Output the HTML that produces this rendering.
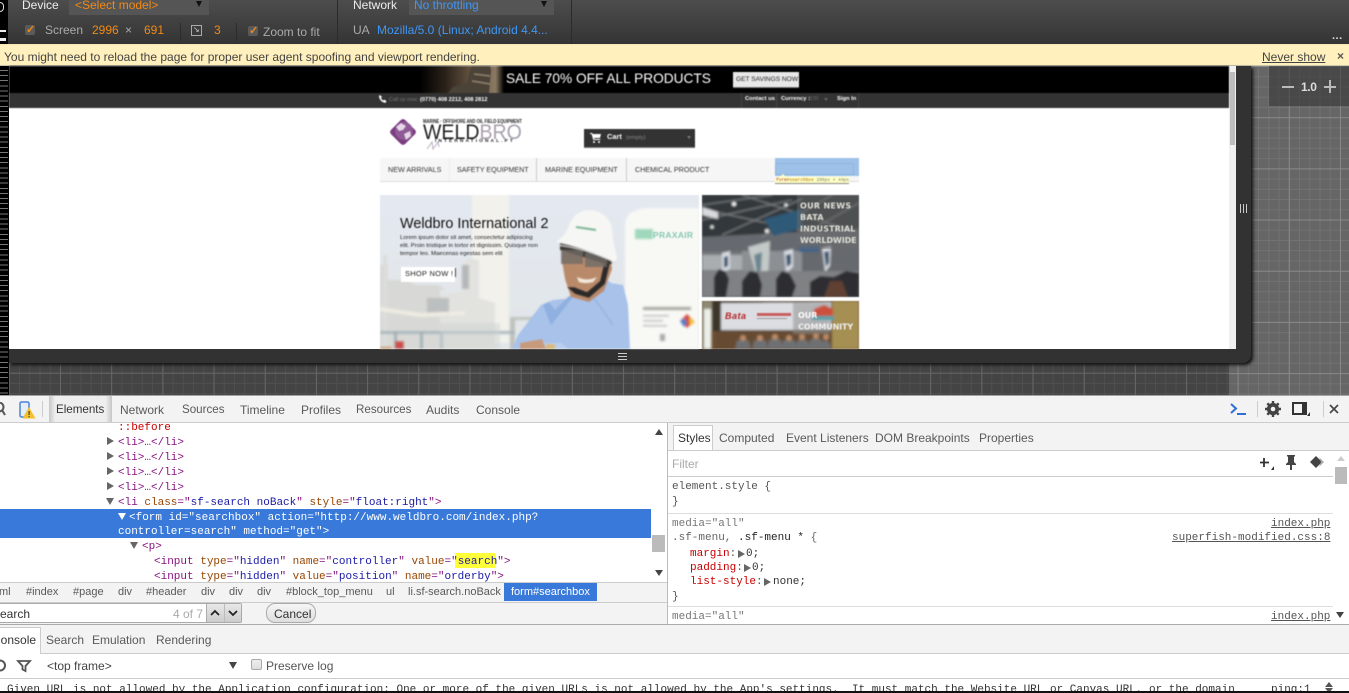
<!DOCTYPE html>
<html><head><meta charset="utf-8"><title>DevTools</title>
<style>
html,body{margin:0;padding:0;width:1349px;height:693px;overflow:hidden;background:#fff}
body{position:relative;font-family:"Liberation Sans",sans-serif;font-size:12px;color:#333}
.a{position:absolute}
.t{position:absolute;white-space:pre;line-height:14px}
.m{position:absolute;white-space:pre;font-family:"Liberation Mono",monospace;font-size:11px;line-height:14px;color:#444;margin-top:1px}
.tag{color:#881280}.an{color:#994500}.av{color:#1a1aa6}.red{color:#c80000}
.ln{position:absolute;background:#ccc}
.tri{position:absolute;width:0;height:0;border-style:solid}
.r{border-width:4px 0 4px 7px;border-color:transparent transparent transparent #666}
.d{border-width:7px 4px 0 4px;border-color:#666 transparent transparent transparent}
.g{color:#5a5a5a}
.bc{font-size:11px}
.or{color:#f08a17}.bl{color:#3f97f5}
.tb{color:#bdbdbd}
.cb{position:absolute;width:10px;height:10px;background:#5a5a5a;border-radius:2px}
.u{text-decoration:underline}
</style></head><body>

<!-- top toolbar -->
<div class="a" style="left:0;top:0;width:1349px;height:44px;background:linear-gradient(#4d4d4d,#343434)"></div>
<div class="a" style="left:0;top:0;width:8px;height:44px;background:#000"></div>
<div class="a" style="left:0;top:30px;width:6px;height:2px;background:#eee"></div>
<div class="a" style="left:0;top:38px;width:6px;height:3px;background:#eee"></div>
<div class="a" style="left:0;top:2px;width:3px;height:8px;border:1px solid #ddd;border-left:0;border-radius:0 4px 4px 0"></div>
<div class="a" style="left:69px;top:0;width:140px;height:15px;background:#555"></div>
<div class="a" style="left:409px;top:0;width:145px;height:15px;background:#555"></div>
<div class="t" style="left:22px;top:-2px;color:#eee">Device</div>
<div class="t or" style="left:75px;top:-2px">&lt;Select model&gt;</div>
<div class="tri" style="left:196px;top:1px;border-width:6px 3px 0;border-color:#111 transparent transparent"></div>
<div class="t" style="left:353px;top:-2px;color:#eee">Network</div>
<div class="t bl" style="left:414px;top:-2px">No throttling</div>
<div class="tri" style="left:541px;top:1px;border-width:6px 3px 0;border-color:#111 transparent transparent"></div>
<div class="a" style="left:337px;top:0;width:1px;height:44px;background:#2b2b2b"></div>
<div class="a" style="left:571px;top:0;width:1px;height:44px;background:#2b2b2b"></div>
<div class="a" style="left:180px;top:23px;width:1px;height:18px;background:#2b2b2b"></div>
<div class="a" style="left:236px;top:23px;width:1px;height:18px;background:#2b2b2b"></div>
<div class="cb" style="left:25px;top:25px"></div><div class="t" style="left:26px;top:23px;color:#f08a17;font-weight:bold;font-size:11px">✓</div>
<div class="t tb" style="left:45px;top:23px;color:#aaa">Screen</div>
<div class="t or" style="left:92px;top:23px">2996</div>
<div class="t" style="left:125px;top:23px;color:#aaa">×</div>
<div class="t or" style="left:144px;top:23px">691</div>
<div class="a" style="left:191px;top:25px;width:9px;height:9px;border:1px solid #aaa"></div>
<div class="t" style="left:193px;top:23px;color:#ccc;font-size:8px">↘</div>
<div class="t or" style="left:214px;top:23px">3</div>
<div class="cb" style="left:248px;top:26px"></div><div class="t" style="left:249px;top:24px;color:#f08a17;font-weight:bold;font-size:11px">✓</div>
<div class="t" style="left:263px;top:25px;color:#aaa">Zoom to fit</div>
<div class="t" style="left:353px;top:23px;color:#aaa">UA</div>
<div class="t bl" style="left:377px;top:23px">Mozilla/5.0 (Linux; Android 4.4...</div>
<div class="t" style="left:1332px;top:29px;color:#ddd;font-weight:bold;font-size:11px;letter-spacing:.5px">...</div>

<!-- notice -->
<div class="a" style="left:0;top:44px;width:1349px;height:21px;background:#fff0bd;border-top:1px solid #f5e8b8;box-sizing:border-box"></div>
<div class="a" style="left:0;top:65px;width:1349px;height:1px;background:#c8c4ae"></div>
<div class="t" style="left:4px;top:50px;color:#444">You might need to reload the page for proper user agent spoofing and viewport rendering.</div>
<div class="t u" style="left:1262px;top:50px;color:#444">Never show</div>
<div class="t" style="left:1337px;top:49px;color:#555;font-weight:bold">×</div>

<!-- canvas background -->
<div class="a" style="left:9px;top:66px;width:1340px;height:329px;background-color:#444;
background-image:linear-gradient(90deg,#666 1px,transparent 1px),linear-gradient(#666 1px,transparent 1px),linear-gradient(90deg,#4f4f4f 1px,transparent 1px),linear-gradient(#4f4f4f 1px,transparent 1px);
background-size:51.2px 51.2px,51.2px 51.2px,10.24px 10.24px,10.24px 10.24px;background-position:-0.2px -0.4px"></div>
<div class="a" style="left:1229px;top:66px;width:120px;height:329px;background-color:#666;
background-image:linear-gradient(90deg,#888 1px,transparent 1px),linear-gradient(#888 1px,transparent 1px),linear-gradient(90deg,#727272 1px,transparent 1px),linear-gradient(#727272 1px,transparent 1px);
background-size:51.2px 51.2px,51.2px 51.2px,10.24px 10.24px,10.24px 10.24px;background-position:8.6px 0px"></div>
<div class="a" style="left:1269px;top:66px;width:80px;height:40px;background:rgba(50,50,50,.55)"></div>
<div class="a" style="left:1282px;top:86px;width:12px;height:2px;background:#bbb"></div>
<div class="t" style="left:1301px;top:80px;color:#ddd;font-weight:bold;font-size:12px;letter-spacing:-.4px">1.0</div>
<div class="a" style="left:1324px;top:86px;width:12px;height:2px;background:#bbb"></div>
<div class="a" style="left:1329px;top:80px;width:2px;height:13px;background:#bbb"></div>
<!-- left ruler -->
<div class="a" style="left:0;top:66px;width:9px;height:329px;background:repeating-linear-gradient(#000 0 4px,#777 4px 5px,#000 5px 5.12px)"></div>
<div class="a" style="left:8px;top:66px;width:1px;height:329px;background:#000"></div>

<!-- device frame -->
<div class="a" style="left:9px;top:66px;width:1242px;height:297px;background:#323232;border-radius:0 0 8px 0;box-shadow:2px 2px 3px #111"></div>
<div class="a" style="left:9px;top:66px;width:1220px;height:283px;background:#fff"></div>
<div class="a" style="left:1229px;top:66px;width:7px;height:283px;background:#f0f0f0"></div>
<div class="a" style="left:1230px;top:72px;width:5px;height:73px;background:#bdbdbd"></div>
<div class="a" style="left:1240px;top:204px;width:1px;height:9px;background:#ccc"></div>
<div class="a" style="left:1243px;top:204px;width:1px;height:9px;background:#ccc"></div>
<div class="a" style="left:1246px;top:204px;width:1px;height:9px;background:#ccc"></div>
<div class="a" style="left:618px;top:353px;width:9px;height:1px;background:#ccc"></div>
<div class="a" style="left:618px;top:356px;width:9px;height:1px;background:#ccc"></div>
<div class="a" style="left:618px;top:359px;width:9px;height:1px;background:#ccc"></div>

<div class="a" style="left:0;top:0;width:1349px;height:349px;filter:blur(.4px)">
<!-- page: promo banner -->
<div class="a" style="left:9px;top:66px;width:1220px;height:27px;background:#000"></div>
<svg class="a" style="left:400px;top:66px" width="110" height="27" viewBox="0 0 110 27"><defs><linearGradient id="bg" x1="0" x2="1"><stop offset="0" stop-color="#000"/><stop offset=".3" stop-color="#2a221a"/><stop offset=".65" stop-color="#6d5a45"/><stop offset=".9" stop-color="#8a7963"/><stop offset="1" stop-color="#000"/></linearGradient></defs><rect x="20" width="84" height="27" fill="url(#bg)"/><path d="M48 27l5-6 14-4 3-13 2-4h18l1 4-2 23z" fill="#4b4238"/><path d="M74 8l16 2M72 15l18 3" stroke="#847663" stroke-width="2"/></svg>
<div class="t" style="left:506px;top:72px;color:#fff;font-size:13.7px">SALE 70% OFF ALL PRODUCTS</div>
<div class="a" style="left:733px;top:72px;width:66px;height:16px;background:#e8e8e8;border-bottom:1px solid #777;box-sizing:border-box"></div>
<div class="t" style="left:736px;top:73px;color:#222;font-size:6.6px">GET SAVINGS NOW</div>

<!-- page: top bar -->
<div class="a" style="left:9px;top:93px;width:1220px;height:15px;background:#333"></div>
<svg class="a" style="left:379px;top:95px" width="8" height="8" viewBox="0 0 8 8"><path d="M1 0l2 2-1 1c.5 1.2 1.3 2 2.500 2.500l1-1 2 2-1 1.200C3 8 0 4 0 1z" fill="#fff"/></svg>
<div class="t" style="left:389px;top:93px;color:#777;font-size:5.4px">Call us now:</div>
<div class="t" style="left:420px;top:93px;color:#fff;font-size:5.6px;font-weight:bold">(0770) 408 2212, 408 2812</div>
<div class="a" style="left:741px;top:93px;width:1px;height:15px;background:#444"></div>
<div class="a" style="left:776px;top:93px;width:1px;height:15px;background:#444"></div>
<div class="a" style="left:858px;top:93px;width:1px;height:15px;background:#444"></div>
<div class="t" style="left:745px;top:92px;color:#fff;font-size:5.8px;font-weight:bold">Contact us</div>
<div class="t" style="left:781px;top:92px;color:#fff;font-size:5.8px;font-weight:bold">Currency :</div>
<div class="t" style="left:809px;top:92px;color:#666;font-size:5.8px">IDR</div>
<div class="tri" style="left:824px;top:98px;border-width:3px 2.500px 0;border-color:#666 transparent transparent"></div>
<div class="t" style="left:837px;top:92px;color:#fff;font-size:5.8px;font-weight:bold">Sign In</div>

<!-- page: logo -->
<svg class="a" style="left:388px;top:117px" width="30" height="30" viewBox="0 0 30 30"><rect x="5" y="5" width="20" height="20" rx="3" transform="rotate(45 15 15)" fill="#7a3d80"/><circle cx="16" cy="14" r="9" fill="#8f5a95"/><path d="M8 10l5-4 5 3-3 4-4 1zM16 17l6-3 1 5-5 4z" fill="#e6d8e8"/></svg>
<div class="t" style="left:423px;top:115px;font-size:5px;color:#222;font-weight:bold;transform:scaleX(.82);transform-origin:0 0">MARINE · OFFSHORE AND OIL FIELD EQUIPMENT</div>
<div class="t" style="left:423px;top:124px;font-size:21px;line-height:18px;color:#222;transform:scaleX(.93);transform-origin:0 0">WELD<span style="color:#a8a0ad">BRO</span></div>
<div class="t" style="left:435px;top:135px;font-size:4.8px;letter-spacing:2.1px;color:#222;font-weight:bold">INTERNATIONAL.PT</div>
<svg class="a" style="left:425px;top:140px" width="22" height="10" viewBox="0 0 22 10"><path d="M2 9l5-7 1 7 5-7 1 5" fill="none" stroke="#b9aec0" stroke-width="1"/></svg>

<!-- page: cart -->
<div class="a" style="left:584px;top:129px;width:111px;height:19px;background:#333;border-bottom:1px solid #777;box-sizing:border-box"></div>
<svg class="a" style="left:590px;top:133px" width="11" height="10" viewBox="0 0 11 10"><path d="M0 0h2l1 1h8l-1 4H4l.300 1h6v1H3.300L1.500 1H0z" fill="#fff"/><circle cx="4" cy="9" r="1" fill="#fff"/><circle cx="9" cy="9" r="1" fill="#fff"/></svg>
<div class="t" style="left:607px;top:130px;color:#fff;font-size:7.4px;font-weight:bold">Cart</div>
<div class="t" style="left:626px;top:131px;color:#888;font-size:5.8px">(empty)</div>
<div class="tri" style="left:687px;top:136px;border-width:3px 2.500px 0;border-color:#777 transparent transparent"></div>

<!-- page: menu -->
<div class="a" style="left:380px;top:158px;width:479px;height:24px;background:#f6f6f6;border-bottom:1px solid #ddd;box-sizing:border-box"></div>
<div class="a" style="left:449px;top:158px;width:1px;height:23px;background:#eee"></div>
<div class="a" style="left:536px;top:158px;width:1px;height:23px;background:#ccc"></div>
<div class="a" style="left:626px;top:158px;width:1px;height:23px;background:#ccc"></div>
<div class="t" style="left:388px;top:163px;font-size:7.2px;color:#333">NEW ARRIVALS</div>
<div class="t" style="left:457px;top:163px;font-size:7.1px;color:#333">SAFETY EQUIPMENT</div>
<div class="t" style="left:545px;top:163px;font-size:7.2px;color:#333">MARINE EQUIPMENT</div>
<div class="t" style="left:635px;top:163px;font-size:7.2px;color:#333">CHEMICAL PRODUCT</div>
<div class="a" style="left:775px;top:158px;width:84px;height:18px;background:#9dc1e8"></div>
<div class="a" style="left:775px;top:163px;width:79px;height:12px;border:1px solid #8fb5df;box-sizing:border-box"></div>
<div class="a" style="left:775px;top:177px;width:74px;height:7px;background:#ffffc4;border-bottom:1px solid #888;box-sizing:border-box"></div>
<div class="t" style="left:776px;top:174px;font-size:4.5px;font-family:'Liberation Mono',monospace;color:#777"><span style="color:#a33">form</span><span style="color:#a60">#searchbox</span> 286px × 44px</div>
<div class="tri" style="left:780px;top:174px;border-width:0 3px 3px;border-color:transparent transparent #ffffc4"></div>

<!-- page: hero -->
<svg class="a" style="left:380px;top:195px" width="319" height="154" viewBox="0 0 319 154">
<defs><linearGradient id="sky" x2="0" y2="1"><stop offset="0" stop-color="#e4e9f1"/><stop offset="1" stop-color="#e2e6e8"/></linearGradient><filter id="b1"><feGaussianBlur stdDeviation="1"/></filter><filter id="b0"><feGaussianBlur stdDeviation=".6"/></filter></defs>
<rect width="319" height="154" fill="url(#sky)"/>
<g filter="url(#b1)">
<rect x="92" y="-2" width="37" height="150" fill="#f2f1ec"/>
<path d="M245 154V30q0-16 25-17h49v141z" fill="#f8f8f5"/>
<path d="M0 70h8v15h18l10 5h22l8 5h-6v59H0z" fill="#d8d9d6"/>
<path d="M60 100l18-3h5V68l6-5 10 2v38l16 5v46H60z" fill="#e2e2df"/>
<rect x="47" y="103" width="22" height="18" fill="#bcbfbf"/>
<rect x="82" y="70" width="7" height="24" fill="#b5b8b9"/>
<rect x="3" y="60" width="4" height="94" fill="#dcdedc"/>
<path d="M0 112l40 6 45-2v4l-45 2-40-6z" fill="#efece2"/>
<path d="M130 122h55v3h-50v30h-5z" fill="#bfc2be"/>
<path d="M0 136h135v3H0z" fill="#a9b6bd"/><path d="M14 136h3v18h-3zM40 136h3v18h-3zM60 136h3v18h-3z" fill="#9eb0b8"/>
<rect x="15" y="146" width="9" height="8" fill="#c9504c"/>
<rect x="0" y="152" width="12" height="2" fill="#c9913c"/>
<rect x="60" y="128" width="60" height="26" fill="#cfd3d4" opacity=".5"/>
</g>
<g filter="url(#b0)">
<path d="M132 154l6-14 23-30 12-5 20-2 32-20 6 5 12 2 5 20 2 44z" fill="#a8c2e9"/>
<path d="M163 110l8 20 4-5 14-18 5-6-5 0-14 14-6-8z" fill="#8fb0e0"/>
<path d="M150 154l4-6 28 0 6 6z" fill="#b9cfee"/><path d="M205 90l28 40" stroke="#8eaede" stroke-width="1" fill="none"/>
<path d="M140 148l22-4 4 10h-26z" fill="#c79a7b"/>
<rect x="166" y="149" width="9" height="5" fill="#d9b97c"/>
<path d="M183 48l47 12 2 14-8 22-15 11-18-5-6-18-3-18z" fill="#b98a6b"/>
<path d="M187 92l8 7 14 4 16-14 6-25-6 0-5 22-13 11-13-5z" fill="#2a2a2a"/>
<path d="M180 47l50 14 2 8-6 0-46-14z" fill="#3c3833"/>
<rect x="181" y="55" width="22" height="14" fill="#6f6a65" opacity=".8"/><rect x="205" y="58" width="22" height="14" fill="#6f6a65" opacity=".8"/>
<path d="M197 82q10 5 20 0l-4 5q-8 2-14 0z" fill="#f3e9dc"/>
<path d="M176 47q9-6 12-14 6-18 22-18 18 2 22 18l1 12 4 18-2 4q-30-14-59-20z" fill="#f6f6f4"/>
<path d="M196 32l20 3" stroke="#69b089" stroke-width="2"/>
<path d="M178 50q30 4 58 18" stroke="#d9d9d7" stroke-width="1" fill="none"/>
</g>
<g filter="url(#b1)"><path d="M300 126l7-7 7 7-7 7z" fill="#d8483f"/><path d="M300 126l5-3 2 5-3 4z" fill="#4f7fc8"/><path d="M309 122l6 5-5 4z" fill="#f2c53c"/>
<rect x="263" y="112" width="48" height="3" fill="#a6a69e"/><rect x="263" y="120" width="26" height="1.500" fill="#bbb"/><rect x="263" y="125" width="20" height="1.500" fill="#bbb"/><rect x="263" y="130" width="24" height="1.500" fill="#bbb"/>
<rect x="280" y="139" width="5" height="7" fill="#aaa"/><rect x="255" y="34" width="18" height="10" fill="#9fd8bb"/></g>
<text x="273" y="43" font-family="Liberation Sans" font-size="8.500" font-weight="bold" fill="#86c9b4" letter-spacing=".3">PRAXAIR</text>
</svg>
<div class="t" style="left:400px;top:217px;font-size:14.4px;color:#111">Weldbro International 2</div>
<div class="t" style="left:400px;top:234px;font-size:5.9px;line-height:8px;color:#222">Lorem ipsum dolor sit amet, consectetur adipiscing
elit. Proin tristique in tortor et dignissim. Quisque non
tempor leo. Maecenas egestas sem elit</div>
<div class="a" style="left:401px;top:267px;width:54px;height:15px;background:#fff"></div>
<div class="t" style="left:405px;top:267px;font-size:7.500px;color:#222;letter-spacing:.25px">SHOP NOW !</div>
<div class="a" style="left:455px;top:268px;width:1px;height:9px;background:#444"></div>

<!-- page: side images -->
<svg class="a" style="left:702px;top:195px" width="157" height="102" viewBox="0 0 157 102">
<defs><filter id="b2"><feGaussianBlur stdDeviation="1"/></filter></defs>
<rect width="157" height="102" fill="#565c62"/>
<g filter="url(#b2)">
<rect width="157" height="42" fill="#33373b"/>
<path d="M0 42l157-8v23H0z" fill="#666b70"/>
<path d="M0 10l70-10M0 25l90-20M20 40L100 4M60 42L130 0M100 40L157 8M0 14l120 26M40 0l110 36" stroke="#85888b" stroke-width="1" fill="none"/>
<path d="M0 12l16 5v7L0 20z" fill="#d8dadc"/>
<circle cx="32" cy="9" r="2" fill="#fff"/><circle cx="84" cy="10" r="1.500" fill="#fff"/><circle cx="10" cy="32" r="1.500" fill="#fff"/><circle cx="65" cy="36" r="2" fill="#eee"/>
<path d="M62 24l38-10v19l-28 8z" fill="#2f5a78"/>
<rect y="57" width="157" height="24" fill="#77797c"/>
<rect x="0" y="60" width="50" height="15" fill="#a9adb0"/><rect x="40" y="56" width="60" height="20" fill="#8c9094"/><rect x="100" y="52" width="57" height="24" fill="#66696d"/>
<path d="M46 52l22-6-2 36-10 4z" fill="#c3c9c7"/><path d="M52 60l8-3-1 18-4 4z" fill="#6c8590"/>
<path d="M20 58l8-2v18l-8 4zM82 56l9-2v18l-7 6zM120 53l9-2-1 20-5 6z" fill="#d7dbe2"/><path d="M22 62l4-1v10l-4 2zM84 60l5-1v10l-4 3zM122 57l5-1v12l-3 4z" fill="#34506c"/>
<path d="M97 50h20v7H97z" fill="#42648a"/>
<rect y="76" width="157" height="26" fill="#7f8183"/>
<path d="M12 102V82l5-8 6 2 4 8-3 18zM40 102V86l8-10 8 2 4 12-2 12zM74 102V84l6-8 8 3 6 12-4 11zM108 102V87l10-6 14 1 12-6 13 2v24z" fill="#2d2f32"/>
<path d="M122 102l6-16h12l6 16z" fill="#5e4130"/>
</g>
<rect x="95" y="0" width="62" height="54" fill="#6a6a6a" opacity=".5"/>
<text x="98" y="13.500" font-family="DejaVu Sans,Liberation Sans" font-size="8" font-weight="bold" fill="#e0e0d8" letter-spacing=".3">OUR NEWS</text>
<text x="98" y="25" font-family="DejaVu Sans,Liberation Sans" font-size="8" font-weight="bold" fill="#e0e0d8" letter-spacing=".3">BATA</text>
<text x="98" y="36.500" font-family="DejaVu Sans,Liberation Sans" font-size="8" font-weight="bold" fill="#e0e0d8" letter-spacing=".1">INDUSTRIAL</text>
<text x="98" y="48" font-family="DejaVu Sans,Liberation Sans" font-size="8" font-weight="bold" fill="#e0e0d8" letter-spacing="-.1">WORLDWIDE</text>
</svg>
<svg class="a" style="left:702px;top:301px" width="157" height="48" viewBox="0 0 157 48">
<rect width="157" height="48" fill="#6b4f33"/>
<g filter="url(#b2)">
<rect x="0" y="0" width="157" height="30" fill="#3b352c"/>
<rect x="0" y="0" width="10" height="48" fill="#8d8a74"/><rect x="2" y="8" width="7" height="40" fill="#ecefe8"/>
<rect x="130" y="0" width="27" height="48" fill="#a68f52"/>
<path d="M19 2l110-1v28H19z" fill="#dcdde2"/>
<path d="M14 30h116v18H14z" fill="#664b30"/>
<path d="M33 48l2-8 6-3 6 3 2 8zM50 48l2-8 6-3 6 3 2 8zM65 48l2-9 6-3 6 3 2 9zM79 48l2-8 6-3 6 3 2 8zM93 48l2-8 5-3 6 3 2 8zM106 48l2-9 6-3 6 3 2 9zM118 48l1-6 5-3 4 3 1 6z" fill="#6e7072"/>
<circle cx="41" cy="37" r="3" fill="#b98a66"/><circle cx="58" cy="37" r="3" fill="#b98a66"/><circle cx="73" cy="36" r="3" fill="#b98a66"/><circle cx="87" cy="37" r="3" fill="#b98a66"/><circle cx="100" cy="36" r="3" fill="#b98a66"/><circle cx="114" cy="35" r="3" fill="#b98a66"/><circle cx="124" cy="36" r="3" fill="#b98a66"/>
<rect x="91" y="2" width="37" height="31" fill="#8f8f8f" opacity=".55"/>
<path d="M112 8l10-4 9 4v7h-19z" fill="#cc4f3e"/><path d="M110 15h22v4h-22z" fill="#4da0a8"/>
</g>
<text x="23" y="18" font-family="Liberation Sans" font-size="9" font-weight="bold" font-style="italic" fill="#b42424" letter-spacing=".5">Bata</text>
<rect x="55" y="12" width="34" height="3" fill="#c76060"/><rect x="55" y="17" width="30" height="1" fill="#999"/>
<text x="96" y="17" font-family="DejaVu Sans,Liberation Sans" font-size="8" font-weight="bold" fill="#fff">OUR</text>
<text x="96" y="28.500" font-family="DejaVu Sans,Liberation Sans" font-size="8" font-weight="bold" fill="#f0f0f0" letter-spacing="-.1">COMMUNITY</text>
</svg>
</div>

<!-- devtools -->
<div class="a" style="left:0;top:395px;width:1349px;height:298px;background:#fff"></div>
<div class="a" style="left:0;top:395px;width:1349px;height:1px;background:#a3a3a3"></div>
<div class="a" style="left:0;top:396px;width:1349px;height:26px;background:#f3f3f3"></div>
<div class="a" style="left:0;top:422px;width:1349px;height:1px;background:#ccc"></div>
<div class="a" style="left:49px;top:396px;width:63px;height:26px;background:linear-gradient(90deg,#c6c6c6,#eee 10%,#eee 90%,#c6c6c6)"></div>
<svg class="a" style="left:0;top:402px" width="8" height="14" viewBox="0 0 8 14"><circle cx="-1" cy="5" r="4.500" fill="none" stroke="#555" stroke-width="2"/><path d="M2 8l3 5" stroke="#555" stroke-width="2"/></svg>
<svg class="a" style="left:19px;top:401px" width="17" height="18" viewBox="0 0 17 18"><rect x="1" y="1" width="9" height="15" rx="1.500" fill="#e6edf7" stroke="#4a84d6" stroke-width="1.500"/><path d="M10 6l6.500 11.500h-13z" fill="#f3c12c"/><rect x="9.500" y="10" width="1.200" height="4" fill="#444"/><rect x="9.500" y="15" width="1.200" height="1.200" fill="#444"/></svg>
<div class="a" style="left:42px;top:401px;width:1px;height:16px;background:#ccc"></div>
<div class="t" style="left:56px;top:403px;color:#333;font-size:11.6px">Elements</div>
<div class="t g" style="left:120px;top:403px">Network</div>
<div class="t g" style="left:182px;top:403px;font-size:11.6px">Sources</div>
<div class="t g" style="left:240px;top:403px">Timeline</div>
<div class="t g" style="left:301px;top:403px">Profiles</div>
<div class="t g" style="left:356px;top:403px;font-size:11.6px">Resources</div>
<div class="t g" style="left:426px;top:403px">Audits</div>
<div class="t g" style="left:476px;top:403px">Console</div>
<svg class="a" style="left:1229px;top:402px" width="18" height="14" viewBox="0 0 18 14"><path d="M2 2l5 4.500-5 4.500" fill="none" stroke="#2f6fd6" stroke-width="2"/><rect x="8" y="11" width="9" height="2" fill="#2f6fd6"/></svg>
<div class="a" style="left:1257px;top:401px;width:1px;height:16px;background:#ccc"></div>
<svg class="a" style="left:1265px;top:401px" width="16" height="16" viewBox="0 0 16 16"><circle cx="8" cy="8" r="4.500" fill="none" stroke="#444" stroke-width="3.200"/><path d="M8 0v16M0 8h16M2.300 2.300l11.400 11.400M13.700 2.300L2.300 13.700" stroke="#444" stroke-width="2.400"/><circle cx="8" cy="8" r="2.300" fill="#f3f3f3"/></svg>
<svg class="a" style="left:1292px;top:402px" width="19" height="15" viewBox="0 0 19 15"><rect x="1" y="1" width="13" height="11" fill="none" stroke="#333" stroke-width="2"/><rect x="10" y="1" width="4" height="11" fill="#333"/><path d="M18 10v4h-3z" fill="#333"/></svg>
<div class="a" style="left:1323px;top:401px;width:1px;height:16px;background:#ccc"></div>
<svg class="a" style="left:1329px;top:404px" width="10" height="10" viewBox="0 0 10 10"><path d="M1 1l8 8M9 1l-8 8" stroke="#444" stroke-width="1.600"/></svg>

<!-- DOM tree -->
<div class="a" style="left:0;top:509px;width:651px;height:29px;background:#3879d9"></div>
<div class="m red" style="left:118px;top:420px">::before</div>
<div class="tri r" style="left:107px;top:437px"></div><div class="m tag" style="left:118px;top:435px">&lt;li&gt;…&lt;/li&gt;</div>
<div class="tri r" style="left:107px;top:452px"></div><div class="m tag" style="left:118px;top:450px">&lt;li&gt;…&lt;/li&gt;</div>
<div class="tri r" style="left:107px;top:467px"></div><div class="m tag" style="left:118px;top:465px">&lt;li&gt;…&lt;/li&gt;</div>
<div class="tri r" style="left:107px;top:482px"></div><div class="m tag" style="left:118px;top:480px">&lt;li&gt;…&lt;/li&gt;</div>
<div class="tri d" style="left:106px;top:498px"></div><div class="m tag" style="left:118px;top:495px">&lt;li <span class="an">class</span>="<span class="av">sf-search noBack</span>" <span class="an">style</span>="<span class="av">float:right</span>"&gt;</div>
<div class="tri d" style="left:118px;top:513px;border-top-color:#fff"></div>
<div class="m" style="left:129px;top:510px;color:#fff">&lt;form id="searchbox" action="http://www.weldbro.com/index.php?</div>
<div class="m" style="left:118px;top:524px;color:#fff">controller=search" method="get"&gt;</div>
<div class="tri d" style="left:130px;top:542px"></div><div class="m tag" style="left:142px;top:539px">&lt;p&gt;</div>
<div class="a" style="left:455px;top:553px;width:41px;height:15px;background:#ffff3a"></div>
<div class="m tag" style="left:154px;top:554px">&lt;input <span class="an">type</span>="<span class="av">hidden</span>" <span class="an">name</span>="<span class="av">controller</span>" <span class="an">value</span>="<span class="av">search</span>"&gt;</div>
<div class="m tag" style="left:154px;top:569px">&lt;input <span class="an">type</span>="<span class="av">hidden</span>" <span class="an">value</span>="<span class="av">position</span>" <span class="an">name</span>="<span class="av">orderby</span>"&gt;</div>
<div class="tri" style="left:655px;top:429px;border-width:0 4px 6px;border-color:transparent transparent #444"></div>
<div class="a" style="left:652px;top:535px;width:13px;height:17px;background:#bbb"></div>
<div class="tri" style="left:655px;top:570px;border-width:6px 4px 0;border-color:#444 transparent transparent"></div>
<div class="a" style="left:667px;top:423px;width:1px;height:202px;background:#bbb"></div>

<!-- breadcrumb -->
<div class="a" style="left:0;top:582px;width:667px;height:1px;background:#ccc"></div>
<div class="a" style="left:0;top:583px;width:667px;height:19px;background:#f3f3f3"></div>
<div class="a" style="left:0;top:602px;width:667px;height:1px;background:#ccc"></div>
<div class="t g bc" style="left:-1px;top:585px">ml</div>
<div class="t g bc" style="left:26px;top:585px">#index</div>
<div class="t g bc" style="left:73px;top:585px">#page</div>
<div class="t g bc" style="left:118px;top:585px">div</div>
<div class="t g bc" style="left:146px;top:585px">#header</div>
<div class="t g bc" style="left:201px;top:585px">div</div>
<div class="t g bc" style="left:229px;top:585px">div</div>
<div class="t g bc" style="left:257px;top:585px">div</div>
<div class="t g bc" style="left:286px;top:585px">#block_top_menu</div>
<div class="t g bc" style="left:386px;top:585px">ul</div>
<div class="t g bc" style="left:408px;top:585px">li.sf-search.noBack</div>
<div class="a" style="left:504px;top:583px;width:93px;height:18px;background:#3879d9"></div>
<div class="t bc" style="left:511px;top:585px;color:#fff">form#searchbox</div>

<!-- search bar -->
<div class="a" style="left:0;top:603px;width:667px;height:21px;background:#f3f3f3"></div>
<div class="a" style="left:0;top:603px;width:242px;height:20px;background:#fff;border:1px solid #aaa;border-left:0;box-sizing:border-box;border-radius:0 2px 2px 0"></div>
<div class="a" style="left:206px;top:604px;width:35px;height:18px;background:linear-gradient(#e8e8e8,#ccc)"></div>
<div class="a" style="left:206px;top:604px;width:1px;height:18px;background:#aaa"></div>
<div class="a" style="left:224px;top:604px;width:1px;height:18px;background:#bbb"></div>
<svg class="a" style="left:208px;top:608px" width="32" height="10" viewBox="0 0 32 10"><path d="M3 7l4-4 4 4M21 3l4 4 4-4" fill="none" stroke="#222" stroke-width="1.800"/></svg>
<div class="t" style="left:-8px;top:607px;color:#333">Search</div>
<div class="t" style="left:173px;top:607px;color:#aaa">4 of 7</div>
<div class="a" style="left:266px;top:603px;width:50px;height:20px;border:1px solid #aaa;border-radius:9px;background:linear-gradient(#f6f6f6,#dedede);box-sizing:border-box"></div>
<div class="t" style="left:274px;top:607px;color:#333">Cancel</div>
<div class="a" style="left:0;top:624px;width:1349px;height:1px;background:#aaa"></div>

<!-- styles -->
<div class="a" style="left:668px;top:423px;width:665px;height:27px;background:#f3f3f3"></div>
<div class="a" style="left:668px;top:450px;width:681px;height:1px;background:#ccc"></div>
<div class="a" style="left:673px;top:425px;width:40px;height:25px;background:#fff;border:1px solid #ccc;border-bottom:0;box-sizing:border-box"></div>
<div class="a" style="left:1333px;top:423px;width:16px;height:27px;background:#f3f3f3"></div>
<div class="t" style="left:678px;top:431px;color:#333">Styles</div>
<div class="t g" style="left:719px;top:431px">Computed</div>
<div class="t g" style="left:786px;top:431px">Event Listeners</div>
<div class="t g" style="left:875px;top:431px">DOM Breakpoints</div>
<div class="t g" style="left:979px;top:431px">Properties</div>
<div class="t" style="left:672px;top:457px;color:#aaa">Filter</div>
<div class="ln" style="left:668px;top:476px;width:665px;height:1px"></div>
<svg class="a" style="left:1258px;top:455px" width="18" height="16" viewBox="0 0 18 16"><path d="M6 3v9M2 7.500h9" stroke="#333" stroke-width="1.800"/><path d="M16 11v4h-3z" fill="#333"/></svg>
<svg class="a" style="left:1284px;top:454px" width="14" height="17" viewBox="0 0 14 17"><path d="M3 1h8v1l-1 1v5l2 2v1H2v-1l2-2V3L3 2zM6 11h2v5H6z" fill="#444"/></svg>
<svg class="a" style="left:1309px;top:455px" width="16" height="14" viewBox="0 0 16 14"><path d="M1 7l6-6 6 6-6 6z" fill="#444"/><path d="M10 2l5 5-5 5 2-5z" fill="#aaa"/></svg>
<div class="tri" style="left:1337px;top:456px;border-width:0 4px 5px;border-color:transparent transparent #ccc"></div>
<div class="a" style="left:1335px;top:467px;width:12px;height:17px;background:#bbb"></div>
<div class="tri" style="left:1336px;top:612px;border-width:6px 4px 0;border-color:#444 transparent transparent"></div>
<div class="m" style="left:672px;top:479px;color:#555">element.style {</div>
<div class="m" style="left:672px;top:494px;color:#555">}</div>
<div class="ln" style="left:668px;top:513px;width:665px;height:1px;background:#ddd"></div>
<div class="m" style="left:672px;top:516px;color:#777">media="all"</div>
<div class="m u" style="left:1271px;top:516px;color:#555">index.php</div>
<div class="m" style="left:672px;top:530px;color:#666">.sf-menu, <span style="color:#222">.sf-menu *</span> {</div>
<div class="m u" style="left:1172px;top:530px;color:#555">superfish-modified.css:8</div>
<div class="m red" style="left:690px;top:546px;color:#c80000">margin<span style="color:#555">:</span></div>
<div class="tri r" style="left:738px;top:550px"></div><div class="m" style="left:746px;top:546px;color:#333">0;</div>
<div class="m red" style="left:690px;top:560px">padding<span style="color:#555">:</span></div>
<div class="tri r" style="left:744px;top:564px"></div><div class="m" style="left:752px;top:560px;color:#333">0;</div>
<div class="m red" style="left:690px;top:574px">list-style<span style="color:#555">:</span></div>
<div class="tri r" style="left:764px;top:578px"></div><div class="m" style="left:773px;top:574px;color:#333">none;</div>
<div class="m" style="left:672px;top:589px;color:#555">}</div>
<div class="ln" style="left:668px;top:606px;width:665px;height:1px;background:#ddd"></div>
<div class="m" style="left:672px;top:609px;color:#777">media="all"</div>
<div class="m u" style="left:1271px;top:609px;color:#555">index.php</div>

<!-- drawer -->
<div class="a" style="left:0;top:625px;width:1349px;height:28px;background:#f3f3f3"></div>
<div class="a" style="left:0;top:653px;width:1349px;height:1px;background:#ccc"></div>
<div class="a" style="left:-1px;top:627px;width:42px;height:27px;background:#fff;border:1px solid #ccc;border-bottom:0;box-sizing:border-box"></div>
<div class="t" style="left:-8px;top:633px;color:#333">Console</div>
<div class="t g" style="left:46px;top:633px">Search</div>
<div class="t g" style="left:92px;top:633px">Emulation</div>
<div class="t g" style="left:156px;top:633px">Rendering</div>
<div class="a" style="left:0;top:678px;width:1349px;height:1px;background:#ccc"></div>
<svg class="a" style="left:0;top:658px" width="36" height="15" viewBox="0 0 36 15"><circle cx="0" cy="7.500" r="5" fill="none" stroke="#555" stroke-width="2"/><path d="M18 3h12l-4.500 5v5l-3-1.500V8z" fill="none" stroke="#555" stroke-width="1.800"/></svg>
<div class="t" style="left:47px;top:659px;color:#444">&lt;top frame&gt;</div>
<div class="tri" style="left:229px;top:662px;border-width:7px 4px 0;border-color:#444 transparent transparent"></div>
<div class="a" style="left:251px;top:659px;width:11px;height:11px;border:1px solid #aaa;border-radius:2px;background:linear-gradient(#eee,#ddd);box-sizing:border-box"></div>
<div class="t" style="left:266px;top:659px;color:#555">Preserve log</div>
<div class="m" style="left:7px;top:682px;color:#333">Given URL is not allowed by the Application configuration: One or more of the given URLs is not allowed by the App's settings.  It must match the Website URL or Canvas URL, or the domain</div>
<div class="m" style="left:1271px;top:682px;color:#333">ping:1</div>
<div class="tri" style="left:1325px;top:682px;border-width:0 4px 5px;border-color:transparent transparent #555"></div>
<div class="tri" style="left:1325px;top:688px;border-width:5px 4px 0;border-color:#555 transparent transparent"></div>
<div class="a" style="left:0;top:691px;width:1349px;height:2px;background:#111"></div>
</body></html>
